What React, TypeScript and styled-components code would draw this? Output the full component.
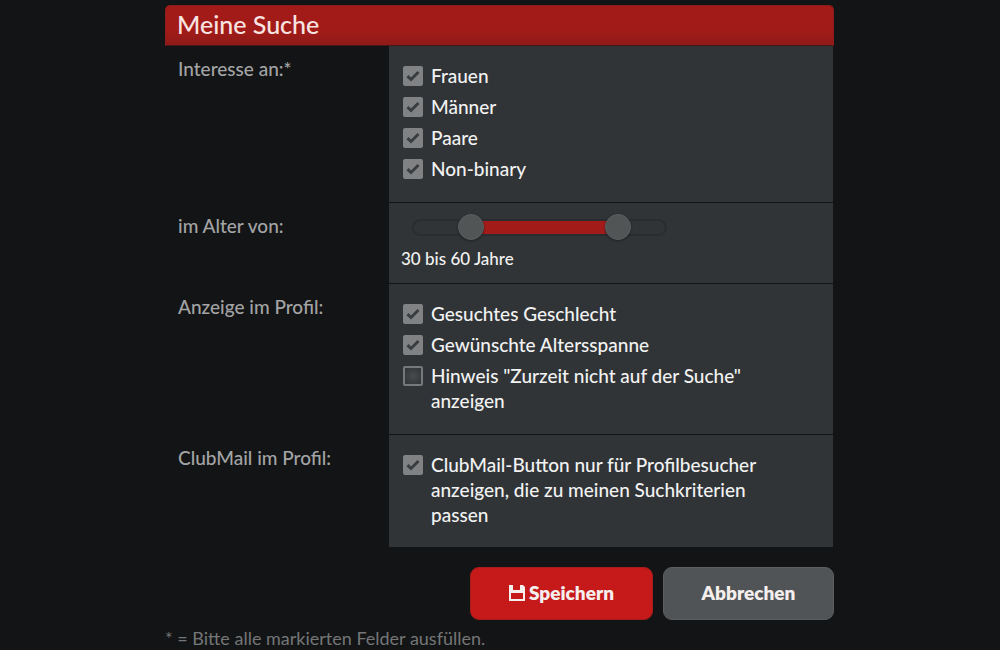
import React, { useState } from "react";
import styled, { createGlobalStyle } from "styled-components";

const GlobalStyle = createGlobalStyle`
  *, *::before, *::after { box-sizing: border-box; }
  body {
    margin: 0;
    background: #131415;
    color: #f2f2f2;
    font-family: Lato, "Liberation Sans", sans-serif;
    font-size: 19px;
    font-weight: 500;
    line-height: 25px;
  }
`;

const Page = styled.main`
  padding: 5px 17px 0 16px;
`;

const Form = styled.form`
  max-width: 669px;
  margin: 0 auto;
`;

const Title = styled.h1`
  margin: 0;
  padding: 0 11px;
  height: 41px;
  font-size: 25px;
  font-weight: 500;
  line-height: 37px;
  color: #f7e4e2;
  background: linear-gradient(#a31b18 60%, #8f1a18);
  border: 1px solid #8c1d1b;
  border-bottom-color: #4a1716;
  border-radius: 5px 5px 0 0;
`;

const Row = styled.div`
  display: grid;
  grid-template-columns: 224px minmax(0, 1fr);
  margin-right: 1px;
`;

const RowLabel = styled.div`
  padding: 10px 13px;
  color: #a3a4a5;
`;

const Panel = styled.div`
  padding: 17px 14px 21px;
  background: #303437;
  border-bottom: 1px solid #131415;

  ${Row}:last-of-type > & {
    padding-bottom: 20px;
    border-bottom: 0;
  }
`;

const OptionList = styled.div`
  display: flex;
  flex-direction: column;
  gap: 6px;
  max-width: 370px;
`;

const Option = styled.label`
  display: grid;
  grid-template-columns: 20px minmax(0, 1fr);
  column-gap: 8px;
`;

const BoxHolder = styled.span`
  display: grid;
  place-items: center;
  width: 20px;
  height: 25px;

  > * { grid-area: 1 / 1; }
`;

const Box = styled.input`
  appearance: none;
  width: 20px;
  height: 20px;
  margin: 0;
  border: 2px solid #76797b;
  border-radius: 2px;
  background: radial-gradient(#484b4d, #303437);

  &:checked {
    background: #808284;
    border-color: #808284;
  }
`;

const Tick = styled.svg`
  width: 14px;
  height: 12px;
  fill: none;
  stroke: #3a3d3f;
  stroke-width: 3;
  pointer-events: none;
`;

const AgePanel = styled(Panel)`
  padding: 11px 12px 12px;
`;

const Slider = styled.div`
  display: grid;
  align-items: center;
  width: 255px;
  height: 26px;
  margin-left: 11px;

  > * { grid-area: 1 / 1; }
`;

const Track = styled.div`
  height: 17px;
  overflow: hidden;
  border: 2px solid #2a2d2f;
  border-radius: 9px;
`;

const Range = styled.div`
  height: 100%;
  background: #a31b18;
`;

const Thumb = styled.input`
  appearance: none;
  width: calc(100% + 26px);
  height: 26px;
  margin: 0 -13px;
  background: none;
  pointer-events: none;

  &::-webkit-slider-thumb {
    appearance: none;
    width: 26px;
    height: 26px;
    border: 1px solid #5c5f61;
    border-radius: 50%;
    background: #525556;
    box-shadow: 0 1px 2px #202224;
    pointer-events: auto;
  }
`;

const AgeText = styled.output`
  display: block;
  margin-top: 6px;
  font-size: 17px;
`;

const Actions = styled.div`
  display: flex;
  justify-content: flex-end;
  gap: 10px;
  margin-top: 20px;
`;

const Button = styled.button<{ $primary?: boolean }>`
  display: flex;
  align-items: center;
  justify-content: center;
  gap: 4px;
  width: ${(p) => (p.$primary ? 183 : 171)}px;
  height: 53px;
  padding: 0 0 2px;
  border: 1px solid ${(p) => (p.$primary ? "#a51d1c" : "#5c5f61")};
  border-radius: 9px;
  background: ${(p) => (p.$primary ? "#c5191a" : "#515456")};
  color: #f5eeee;
  font: 800 19px/25px Lato, "Liberation Sans", sans-serif;
`;

const SaveIcon = styled.svg`
  width: 16px;
  height: 16px;
  fill: currentColor;
`;

const Note = styled.p`
  margin: 6px 0 0;
  font-size: 18px;
  font-weight: 400;
  color: #747677;
`;

function CheckOption({ text, initial = true }: { text: string; initial?: boolean }) {
  const [checked, setChecked] = useState(initial);
  return (
    <Option>
      <BoxHolder>
        <Box type="checkbox" checked={checked} onChange={(e) => setChecked(e.target.checked)} />
        {checked && (
          <Tick viewBox="0 0 14 12" aria-hidden="true">
            <path d="M1.5 6.2 5 9.5 12.5 2" />
          </Tick>
        )}
      </BoxHolder>
      <span>{text}</span>
    </Option>
  );
}

const MIN_AGE = 18;
const MAX_AGE = 70;
const percent = (age: number) => ((age - MIN_AGE) / (MAX_AGE - MIN_AGE)) * 100;

function AgeRange() {
  const [from, setFrom] = useState(30);
  const [to, setTo] = useState(60);
  return (
    <>
      <Slider>
        <Track>
          <Range style={{ marginLeft: `${percent(from)}%`, width: `${percent(to) - percent(from)}%` }} />
        </Track>
        <Thumb type="range" aria-label="Alter von" min={MIN_AGE} max={MAX_AGE} value={from}
          onChange={(e) => setFrom(Math.min(Number(e.target.value), to))} />
        <Thumb type="range" aria-label="Alter bis" min={MIN_AGE} max={MAX_AGE} value={to}
          onChange={(e) => setTo(Math.max(Number(e.target.value), from))} />
      </Slider>
      <AgeText>{`${from} bis ${to} Jahre`}</AgeText>
    </>
  );
}

export default function App() {
  return (
    <Page>
      <GlobalStyle />
      <Form onSubmit={(e) => e.preventDefault()}>
        <Title>Meine Suche</Title>
        <section>
          <Row role="group" aria-labelledby="interest">
            <RowLabel id="interest">Interesse an:*</RowLabel>
            <Panel>
              <OptionList>
                <CheckOption text="Frauen" />
                <CheckOption text="Männer" />
                <CheckOption text="Paare" />
                <CheckOption text="Non-binary" />
              </OptionList>
            </Panel>
          </Row>
          <Row role="group" aria-labelledby="age">
            <RowLabel id="age">im Alter von:</RowLabel>
            <AgePanel>
              <AgeRange />
            </AgePanel>
          </Row>
          <Row role="group" aria-labelledby="display">
            <RowLabel id="display">Anzeige im Profil:</RowLabel>
            <Panel>
              <OptionList>
                <CheckOption text="Gesuchtes Geschlecht" />
                <CheckOption text="Gewünschte Altersspanne" />
                <CheckOption text={'Hinweis "Zurzeit nicht auf der Suche" anzeigen'} initial={false} />
              </OptionList>
            </Panel>
          </Row>
          <Row role="group" aria-labelledby="clubmail">
            <RowLabel id="clubmail">ClubMail im Profil:</RowLabel>
            <Panel>
              <OptionList>
                <CheckOption text="ClubMail-Button nur für Profilbesucher anzeigen, die zu meinen Suchkriterien passen" />
              </OptionList>
            </Panel>
          </Row>
        </section>
        <Actions>
          <Button type="submit" $primary>
            <SaveIcon viewBox="0 0 16 16" aria-hidden="true">
              <path fillRule="evenodd" d="M0 0H4V5H11V0H14L16 2V16H0ZM2 8V14H14V8Z" />
            </SaveIcon>
            Speichern
          </Button>
          <Button type="button">Abbrechen</Button>
        </Actions>
        <Note>* = Bitte alle markierten Felder ausfüllen.</Note>
      </Form>
    </Page>
  );
}
